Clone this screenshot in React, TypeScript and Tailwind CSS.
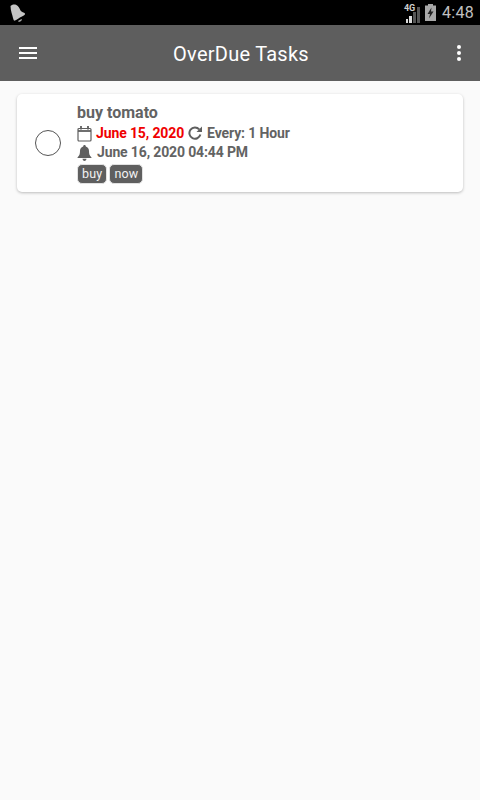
function StatusBar() {
  return (
    <div className="flex h-[25px] items-center justify-between bg-black pl-[10px] pr-[6px]">
      {/* notification bell */}
      <svg width="16" height="18" viewBox="0 0 16 18" className="mt-[1px]">
        <path d="M0.5 2 C1.5 0.5 4 0 6 0.7 C9 2 9.5 4.5 10.5 6.5 C11.5 8 14 8.5 15 9.5 C15.5 10.5 14 11.5 12 12.5 C9 14 7 15.5 5 16.5 C4 17 3.5 16 3 14 C2.5 11 0.5 7 0.5 2 Z" fill="#c4c4c4" />
        <path d="M8 17 L11.5 15 L12 16 L10 17.8 L8.5 17.8 Z" fill="#a8a8a8" />
      </svg>
      <div className="flex items-center">
        <div className="relative h-[20px] w-[17px]">
          <span className="absolute left-0 top-[1px] font-['Roboto',sans-serif] text-[9px] font-bold leading-[9px] text-[#cfcfcf]">4G</span>
          <svg width="17" height="20" viewBox="0 0 17 20" className="absolute left-0 top-0">
            <rect x="2" y="16" width="2" height="4" fill="#ddd" />
            <rect x="5" y="13" width="3" height="7" fill="#ddd" />
            <rect x="9" y="9" width="3" height="11" fill="#555" />
            <rect x="13" y="4" width="3" height="16" fill="#555" />
          </svg>
        </div>
        <svg width="11" height="17" viewBox="0 0 11 17" className="ml-[4px]">
          <rect x="3" y="0" width="5" height="2" fill="#a8a8a8" />
          <rect x="0" y="1.5" width="11" height="15.5" fill="#a8a8a8" />
          <path d="M6.5 3.5 L2.5 10 L5 10 L4 14.5 L8.5 7.5 L6 7.5 Z" fill="#222" />
        </svg>
        <span className="ml-[6px] font-['Roboto',sans-serif] text-[16px] leading-[25px] tracking-[0.3px] text-[#c0c0c0]">4:48</span>
      </div>
    </div>
  );
}

function AppBar() {
  return (
    <header className="flex h-[56px] items-center bg-[#5e5e5e] pl-[19px] pr-[19px]">
      <div className="flex-1">
        <div className="flex w-[18px] flex-col gap-[3px]">
          <div className="h-[2px] bg-white" />
          <div className="h-[2px] bg-white" />
          <div className="h-[2px] bg-white" />
        </div>
      </div>
      <h1 className="ml-[2px] mt-[1px] font-['Roboto',sans-serif] text-[20px] font-normal leading-[26px] tracking-[0.25px] text-white">OverDue Tasks</h1>
      <div className="flex flex-1 justify-end">
        <div className="flex w-[4px] flex-col gap-[2px]">
          <div className="size-[4px] rounded-full bg-white" />
          <div className="size-[4px] rounded-full bg-white" />
          <div className="size-[4px] rounded-full bg-white" />
        </div>
      </div>
    </header>
  );
}

function CalendarIcon() {
  return (
    <svg width="15" height="16" viewBox="0 0 15 16" fill="none" stroke="#5f5f5f" strokeWidth="1.2">
      <rect x="1" y="2.5" width="13" height="12.5" rx="1" />
      <path d="M1 5 H14" strokeWidth="1.8" />
      <path d="M4 0 V3.5 M11 0 V3.5" strokeWidth="1.8" />
    </svg>
  );
}

function BellIcon() {
  return (
    <svg width="15" height="16" viewBox="0 0 15 16" fill="#5f5f5f">
      <path d="M7.5 0 C8.3 0 8.8 0.6 8.8 1.4 C11 2 12 3.8 12 6 C12 9 12.6 10.6 14.5 12.4 V13 H0.5 V12.4 C2.4 10.6 3 9 3 6 C3 3.8 4 2 6.2 1.4 C6.2 0.6 6.7 0 7.5 0 Z" />
      <path d="M5.5 13.8 H9.5 C9.5 15 8.6 16 7.5 16 C6.4 16 5.5 15 5.5 13.8 Z" />
    </svg>
  );
}

function RedoIcon() {
  return (
    <svg width="14" height="14" viewBox="0 0 14 14" fill="none" className="ml-[4px] mt-[-2px]">
      <path d="M11.2 3.4 A5.6 5.6 0 1 0 12.4 8.6" stroke="#5f5f5f" strokeWidth="2" />
      <path d="M14 0.5 V6 H8.5 Z" fill="#5f5f5f" />
    </svg>
  );
}

function Tag({ label }: { label: string }) {
  return (
    <span className="rounded-[5px] border border-[#e2e2e2] bg-[#5f5f5f] px-[4px] text-[12.5px] leading-[18px] tracking-[0.2px] text-[#f2f2f2]">
      {label}
    </span>
  );
}

export default function App() {
  return (
    <div className="flex h-[800px] flex-col bg-[#fafafa] font-['Roboto',sans-serif]">
      <StatusBar />
      <AppBar />
      <main className="px-[17px] pt-[13px]">
        <div className="flex h-[98px] items-center rounded-[5px] bg-white shadow-[0_1px_3px_rgba(0,0,0,0.25)]">
          <div className="ml-[18px] size-[26px] rounded-full border-[1.3px] border-[#555]" />
          <div className="ml-[16px] flex flex-col text-[#636363]">
            <div className="mt-[1px] text-[16px] font-bold leading-[20px]">buy tomato</div>
            <div className="mt-[1px] flex h-[19px] items-center text-[14px] font-bold tracking-[-0.12px]">
              <CalendarIcon />
              <span className="ml-[4px] text-[#f00000]">June 15, 2020</span>
              <RedoIcon />
              <span className="ml-[5px]">Every: 1 Hour</span>
            </div>
            <div className="flex h-[19px] items-center text-[14px] font-bold tracking-[-0.14px]">
              <BellIcon />
              <span className="ml-[5px]">June 16, 2020 04:44 PM</span>
            </div>
            <div className="mt-[2px] flex gap-[2px]">
              <Tag label="buy" />
              <Tag label="now" />
            </div>
          </div>
        </div>
      </main>
    </div>
  );
}
